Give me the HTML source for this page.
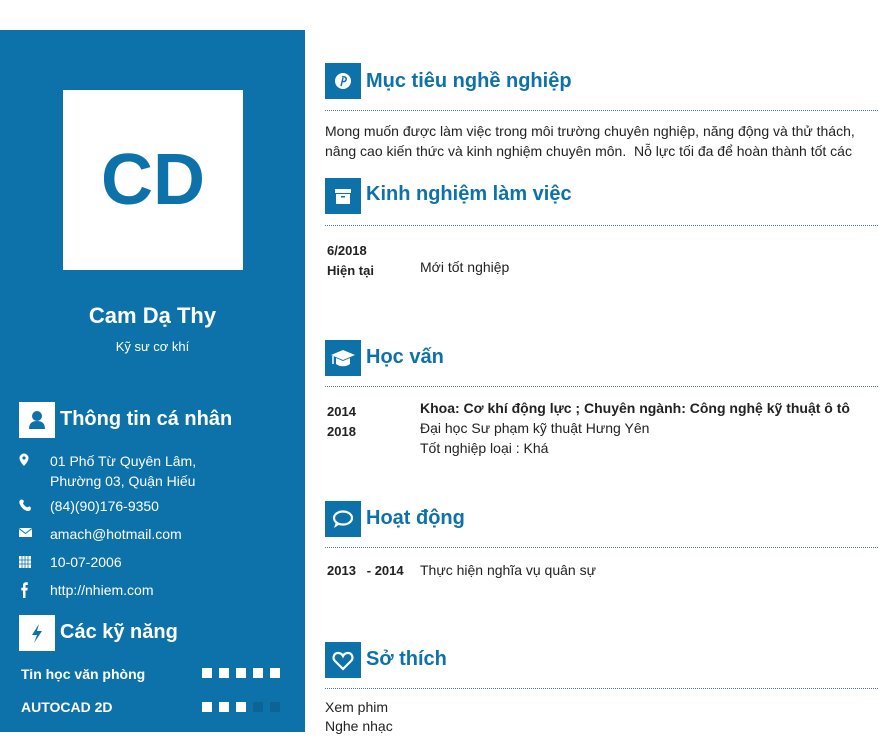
<!DOCTYPE html>
<html><head><meta charset="utf-8"><style>
*{margin:0;padding:0;box-sizing:border-box}
body{width:894px;height:750px;background:#fff;position:relative;font-family:"Liberation Sans",Arial,sans-serif;overflow:hidden;color:#333}
.a{position:absolute;white-space:nowrap}
#side{position:absolute;left:0;top:30px;width:305px;height:702px;background:#0e72aa}
.photo{left:63px;top:90px;width:180px;height:180px;background:#fff;color:#0e72aa;font-weight:bold;font-size:72px;text-align:center;line-height:180px}
.w{color:#fff}
.sh{font-size:20px;font-weight:bold;color:#fff}
.sbox{width:36px;height:36px;background:#fff}
.rbox{width:36px;height:36px;background:#0e72aa}
.rt{font-size:20px;font-weight:bold;color:#0e72aa}
.line{left:325px;width:553px;border-top:1px dotted #4a7a98;height:0}
.t{font-size:14px;color:#222}
.d13{font-size:13px}
.b{font-weight:bold}
.sq{position:absolute;width:10px;height:10px;background:#fff}
.sq.d{background:#0b6396}
.inf{font-size:14px;color:#fff}
</style></head><body>
<div id="side"></div>
<div class="a photo">CD</div>
<div class="a w b" style="left:0;width:305px;text-align:center;top:303px;font-size:22px">Cam Dạ Thy</div>
<div class="a w" style="left:0;width:305px;text-align:center;top:339px;font-size:13px">Kỹ sư cơ khí</div>

<div class="a sbox" style="left:19px;top:402px"><svg width="36" height="36"><circle cx="18" cy="14" r="5" fill="#0e72aa"/><path d="M10 27 Q10 19 18 19 Q26 19 26 27 Z" fill="#0e72aa"/></svg></div>
<div class="a sh" style="left:60px;top:408px">Thông tin cá nhân</div>
<svg class="a" style="left:18px;top:452px" width="16" height="150" fill="#fff">
<path d="M6 1.5a4.5 4.5 0 0 1 4.5 4.5c0 3.5-4.5 8-4.5 8s-4.5-4.5-4.5-8a4.5 4.5 0 0 1 4.5-4.5z"/><circle cx="6" cy="6" r="1.6" fill="#0e72aa"/>
<path d="M1.5 49c1-2 3-2 4.5 0l-1 2.2c1 2 2.2 3.2 4.2 4.2l2.2-1c2 1 2 3 0 4.5-4.5 1.2-11-5.4-9.9-9.9z"/>
<rect x="1" y="76" width="13" height="9"/><path d="M1 76.5l6.5 5 6.5-5" stroke="#0e72aa" fill="none"/>
<rect x="1" y="104" width="12" height="12"/><path d="M1 108h12M1 112h12M4 104v12M7 104v12M10 104v12" stroke="#0e72aa" stroke-width=".8"/>
<path d="M5 146v-7.5H3.3v-2.7H5v-2.2c0-2.2 1.1-3.3 3.2-3.3h1.6v2.7H8.4c-.6 0-.9.3-.9.9v1.9h2.2l-.3 2.7H7.5v7.5z"/>
</svg>
<div class="a inf" style="left:50px;top:451px;line-height:20px">01 Phố Từ Quyên Lâm,<br>Phường 03, Quận Hiếu</div>
<div class="a inf" style="left:50px;top:498px">(84)(90)176-9350</div>
<div class="a inf" style="left:50px;top:526px">amach@hotmail.com</div>
<div class="a inf" style="left:50px;top:554px">10-07-2006</div>
<div class="a inf" style="left:50px;top:582px">http://nhiem.com</div>

<div class="a sbox" style="left:19px;top:615px"><svg width="36" height="36"><path d="M20 9l-7 11h5l-3 8 8-12h-5z" fill="#0e72aa"/></svg></div>
<div class="a sh" style="left:60px;top:621px">Các kỹ năng</div>
<div class="a w b" style="left:21px;top:666px;font-size:14px">Tin học văn phòng</div>
<div class="a w b" style="left:21px;top:699px;font-size:14px">AUTOCAD 2D</div>
<div class="sq" style="left:202px;top:668px"></div><div class="sq" style="left:219px;top:668px"></div><div class="sq" style="left:236px;top:668px"></div><div class="sq" style="left:253px;top:668px"></div><div class="sq" style="left:270px;top:668px"></div>
<div class="sq" style="left:202px;top:702px"></div><div class="sq" style="left:219px;top:702px"></div><div class="sq" style="left:236px;top:702px"></div><div class="sq d" style="left:253px;top:702px"></div><div class="sq d" style="left:270px;top:702px"></div>

<!-- right -->
<div class="a rbox" style="left:325px;top:63px"><svg width="36" height="36"><circle cx="18" cy="18" r="8" fill="#fff"/><path d="M17 14c3-1 5 1 4 3s-3 2-4 1M18 15l-2 8" stroke="#0e72aa" stroke-width="1.5" fill="none"/></svg></div>
<div class="a rt" style="left:366px;top:70px">Mục tiêu nghề nghiệp</div>
<div class="a line" style="top:110px"></div>
<div class="a t" style="left:325px;top:121px;line-height:20px">Mong muốn được làm việc trong môi trường chuyên nghiệp, năng động và thử thách,<br>nâng cao kiến thức và kinh nghiệm chuyên môn.&nbsp; Nỗ lực tối đa để hoàn thành tốt các</div>

<div class="a rbox" style="left:325px;top:178px"><svg width="36" height="36"><rect x="10" y="11" width="16" height="4" fill="#fff"/><rect x="11" y="16" width="14" height="10" fill="#fff"/><rect x="16" y="18" width="4" height="1.5" fill="#0e72aa"/></svg></div>
<div class="a rt" style="left:366px;top:183px">Kinh nghiệm làm việc</div>
<div class="a line" style="top:225px"></div>
<div class="a t d13 b" style="left:327px;top:243px">6/2018</div>
<div class="a t d13 b" style="left:327px;top:263px">Hiện tại</div>
<div class="a t" style="left:420px;top:259px">Mới tốt nghiệp</div>

<div class="a rbox" style="left:325px;top:340px"><svg width="36" height="36"><path d="M6 15l12-5 12 5-12 5z" fill="#fff"/><path d="M11 18v6c4 3 10 3 14 0v-6l-7 3z" fill="#fff"/><path d="M8 16v8" stroke="#fff" stroke-width="1.5"/></svg></div>
<div class="a rt" style="left:366px;top:346px">Học vấn</div>
<div class="a line" style="top:386px"></div>
<div class="a t d13 b" style="left:327px;top:404px">2014</div>
<div class="a t d13 b" style="left:327px;top:424px">2018</div>
<div class="a t b" style="left:420px;top:400px">Khoa: Cơ khí động lực ; Chuyên ngành: Công nghệ kỹ thuật ô tô</div>
<div class="a t" style="left:420px;top:420px">Đại học Sư phạm kỹ thuật Hưng Yên</div>
<div class="a t" style="left:420px;top:440px">Tốt nghiệp loại : Khá</div>

<div class="a rbox" style="left:325px;top:501px"><svg width="36" height="36"><ellipse cx="18" cy="17" rx="9" ry="6.5" fill="none" stroke="#fff" stroke-width="2.2"/><path d="M11 21l-2 6 6-4" fill="#fff"/></svg></div>
<div class="a rt" style="left:366px;top:507px">Hoạt động</div>
<div class="a line" style="top:547px"></div>
<div class="a t d13 b" style="left:327px;top:563px">2013&nbsp;&nbsp;&nbsp;- 2014</div>
<div class="a t" style="left:420px;top:562px">Thực hiện nghĩa vụ quân sự</div>

<div class="a rbox" style="left:325px;top:642px"><svg width="36" height="36"><path d="M18 27l-8-8c-3-3-1-8 3-8 2 0 4 1 5 3 1-2 3-3 5-3 4 0 6 5 3 8z" fill="none" stroke="#fff" stroke-width="2.2"/></svg></div>
<div class="a rt" style="left:366px;top:648px">Sở thích</div>
<div class="a line" style="top:688px"></div>
<div class="a t" style="left:325px;top:699px">Xem phim</div>
<div class="a t" style="left:325px;top:718px">Nghe nhạc</div>
</body></html>
